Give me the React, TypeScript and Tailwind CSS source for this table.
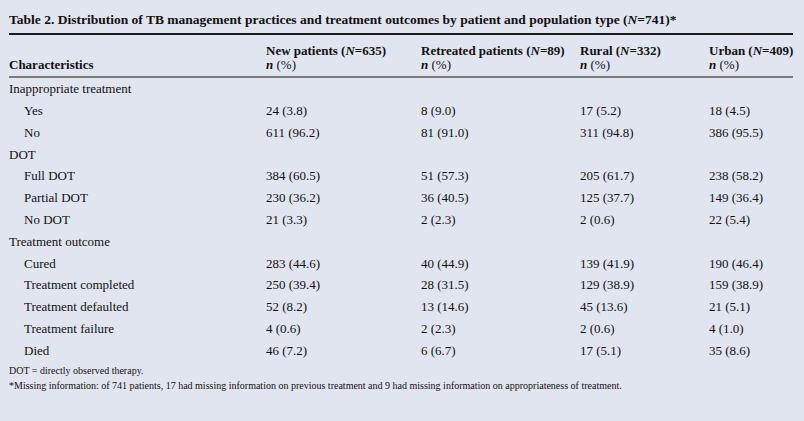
import React from "react";

const cols = "grid grid-cols-[257px_155px_159px_129px_1fr]";

type Row = { label: string; indent?: boolean; v?: string[] };

const rows: Row[] = [
  { label: "Inappropriate treatment" },
  { label: "Yes", indent: true, v: ["24 (3.8)", "8 (9.0)", "17 (5.2)", "18 (4.5)"] },
  { label: "No", indent: true, v: ["611 (96.2)", "81 (91.0)", "311 (94.8)", "386 (95.5)"] },
  { label: "DOT" },
  { label: "Full DOT", indent: true, v: ["384 (60.5)", "51 (57.3)", "205 (61.7)", "238 (58.2)"] },
  { label: "Partial DOT", indent: true, v: ["230 (36.2)", "36 (40.5)", "125 (37.7)", "149 (36.4)"] },
  { label: "No DOT", indent: true, v: ["21 (3.3)", "2 (2.3)", "2 (0.6)", "22 (5.4)"] },
  { label: "Treatment outcome" },
  { label: "Cured", indent: true, v: ["283 (44.6)", "40 (44.9)", "139 (41.9)", "190 (46.4)"] },
  { label: "Treatment completed", indent: true, v: ["250 (39.4)", "28 (31.5)", "129 (38.9)", "159 (38.9)"] },
  { label: "Treatment defaulted", indent: true, v: ["52 (8.2)", "13 (14.6)", "45 (13.6)", "21 (5.1)"] },
  { label: "Treatment failure", indent: true, v: ["4 (0.6)", "2 (2.3)", "2 (0.6)", "4 (1.0)"] },
  { label: "Died", indent: true, v: ["46 (7.2)", "6 (6.7)", "17 (5.1)", "35 (8.6)"] },
];

const heads = [
  ["New patients (", "N", "=635)"],
  ["Retreated patients (", "N", "=89)"],
  ["Rural (", "N", "=332)"],
  ["Urban (", "N", "=409)"],
];

export default function App() {
  return (
    <div
      className="w-[804px] h-[421px] bg-[#e1e5f0] text-[#111111] px-[9px] pt-[10px] overflow-hidden"
      style={{ fontFamily: '"Liberation Serif", "DejaVu Serif", serif' }}
    >
      <div className="text-[13.5px] font-bold leading-[20px] w-[784px] whitespace-nowrap">
        Table 2. Distribution of TB management practices and treatment outcomes by patient and population type (<i>N</i>=741)*
      </div>
      <div className="w-[784px] mt-[3px] border-t-2 border-[#1c1c1c]" />
      <div className={`${cols} w-[784px] text-[13px] leading-[14px] font-bold pt-[9px] pb-[4px] border-b-2 border-[#7a7a7a]`}>
        <div className="self-end">Characteristics</div>
        {heads.map((h, i) => (
          <div key={i} className="flex flex-col whitespace-nowrap">
            <span>
              {h[0]}
              <i>{h[1]}</i>
              {h[2]}
            </span>
            <span className="font-normal">
              <b><i>n</i></b> (%)
            </span>
          </div>
        ))}
      </div>
      <div className="w-[784px] text-[13px]">
        {rows.map((r, i) => (
          <div key={i} className={`${cols} h-[21.8px] items-center`}>
            <div className={r.indent ? "pl-[15px]" : ""}>{r.label}</div>
            {(r.v ?? ["", "", "", ""]).map((c, j) => (
              <div key={j}>{c}</div>
            ))}
          </div>
        ))}
      </div>
      <div className="text-[10px] leading-[15px] pt-[2px] whitespace-nowrap">
        <div>DOT = directly observed therapy.</div>
        <div>*Missing information: of 741 patients, 17 had missing information on previous treatment and 9 had missing information on appropriateness of treatment.</div>
      </div>
    </div>
  );
}
